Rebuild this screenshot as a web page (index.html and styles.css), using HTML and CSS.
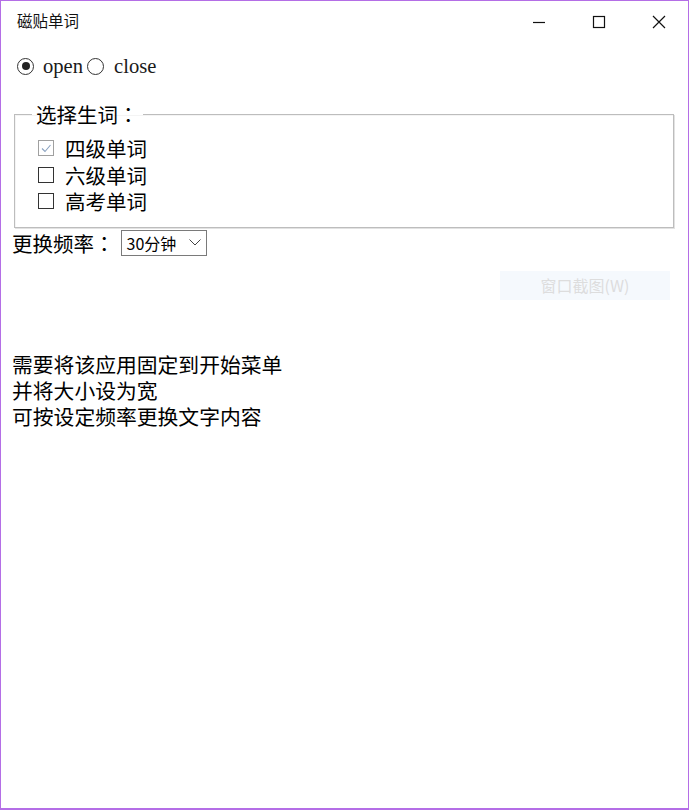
FILE: index.html
```html
<!DOCTYPE html>
<html lang="zh-CN">
<head>
<meta charset="utf-8">
<title>磁贴单词</title>
<link rel="stylesheet" href="styles.css">
</head>
<body>
<div class="window">
  <div class="titlebar">
    <div class="title">磁贴单词</div>
    <div class="caption">
      <div class="cbtn"><svg width="14" height="14" viewBox="0 0 14 14"><line x1="1" y1="7.5" x2="13" y2="7.5" stroke="#111" stroke-width="1.2"/></svg></div>
      <div class="cbtn"><svg width="14" height="14" viewBox="0 0 14 14"><rect x="1.5" y="1.5" width="11" height="11" fill="none" stroke="#111" stroke-width="1.2"/></svg></div>
      <div class="cbtn"><svg width="14" height="14" viewBox="0 0 14 14"><path d="M1 1 L13 13 M13 1 L1 13" stroke="#111" stroke-width="1.2"/></svg></div>
    </div>
  </div>

  <div class="radios">
    <span class="radio checked"></span><span class="rtext">open</span>
    <span class="radio second"></span><span class="rtext second">close</span>
  </div>

  <fieldset class="group">
    <legend class="legend">选择生词<span class="colon" lang="zh-TW">：</span></legend>
    <div class="chk"><span class="box checked"><svg width="14" height="14" viewBox="0 0 14 14"><polyline points="3,7.5 6,10.5 11.5,4" fill="none" stroke="#8aa2c0" stroke-width="1.1"/></svg></span><span>四级单词</span></div>
    <div class="chk"><span class="box"></span><span>六级单词</span></div>
    <div class="chk"><span class="box"></span><span>高考单词</span></div>
  </fieldset>

  <div class="freq">
    <span class="flabel">更换频率<span class="colon" lang="zh-TW">：</span></span>
    <div class="select"><span>30分钟</span><svg width="12" height="7" viewBox="0 0 12 7"><polyline points="0.5,0.5 6,6 11.5,0.5" fill="none" stroke="#444" stroke-width="1"/></svg></div>
  </div>

  <div class="btnrow"><div class="shot">窗口截图(W)</div></div>

  <div class="notes">
    <div>需要将该应用固定到开始菜单</div>
    <div>并将大小设为宽</div>
    <div>可按设定频率更换文字内容</div>
  </div>
</div>
</body>
</html>
```

FILE: styles.css
```css
* { box-sizing: border-box; }
html, body { margin: 0; padding: 0; background: #fff; }
body { font-family: "Noto Sans CJK SC", "Liberation Sans", sans-serif; color: #000; }

.window {
  width: 689px;
  height: 810px;
  border: 1px solid #b46ee6;
  border-bottom-width: 2px;
  background: #fff;
  overflow: hidden;
}

.titlebar {
  height: 40px;
  display: flex;
  align-items: center;
  justify-content: space-between;
}
.title {
  padding-left: 16px;
  font-size: 15.5px;
  line-height: 20px;
  margin-top: -2px;
  color: #111;
}
.caption { display: flex; height: 40px; margin-right: -1px; }
.cbtn {
  width: 60px;
  height: 40px;
  display: flex;
  align-items: center;
  justify-content: center;
  padding-top: 2px;
}

.radios {
  display: flex;
  align-items: center;
  height: 26px;
  margin-top: 12px;
  padding-left: 16px;
}
.radio {
  width: 17px;
  height: 17px;
  border: 1px solid #333;
  border-radius: 50%;
  display: inline-flex;
  align-items: center;
  justify-content: center;
  flex: none;
}
.radio.checked::after {
  content: "";
  width: 8px;
  height: 8px;
  border-radius: 50%;
  background: #222;
}
.radio.second { margin-left: 4px; }
.rtext {
  font-family: "Liberation Serif", serif;
  font-size: 20.6px;
  line-height: 26px;
  margin-left: 9px;
  color: #1a1a1a;
}
.rtext.second { margin-left: 10px; }

.colon { font-family: "Noto Sans CJK TC", "Noto Sans CJK SC", sans-serif; }

.group {
  margin: 22px 14px 0 13px;
  padding: 8px 0 12px 23px;
  border: 1px solid #bdbdbd;
  box-shadow: 1px 1px 0 #e2e2e2, inset 1px 1px 0 #f4f4f4;
  min-width: 0;
}
.legend {
  font-size: 20.5px;
  line-height: 26px;
  padding: 0 4px;
  margin-left: -6px;
}
.chk {
  display: flex;
  align-items: center;
  height: 26.5px;
  font-size: 20.5px;
  line-height: 26px;
}
.box {
  width: 16px;
  height: 16px;
  border: 1px solid #333;
  margin-right: 11px;
  display: inline-flex;
  align-items: center;
  justify-content: center;
  flex: none;
}
.box.checked { border-color: #a0a0a0; }

.freq {
  display: flex;
  align-items: center;
  margin-top: 1px;
  padding-left: 11px;
  height: 28px;
}
.flabel { font-size: 20.5px; line-height: 26px; }
.select {
  margin-left: 6px;
  width: 86px;
  height: 26px;
  border: 1px solid #7a7a7a;
  display: flex;
  align-items: center;
  justify-content: space-between;
  padding: 0 5px 0 5px;
  font-size: 16px;
  line-height: 22px;
}

.btnrow {
  display: flex;
  margin-top: 14px;
  padding-left: 499px;
}
.shot {
  width: 170px;
  height: 29px;
  background: #f5f9fd;
  color: #dddddd;
  font-size: 16px;
  line-height: 29px;
  text-align: center;
}

.notes {
  margin-top: 51px;
  padding-left: 11px;
  font-size: 20.8px;
  line-height: 26px;
}
```
